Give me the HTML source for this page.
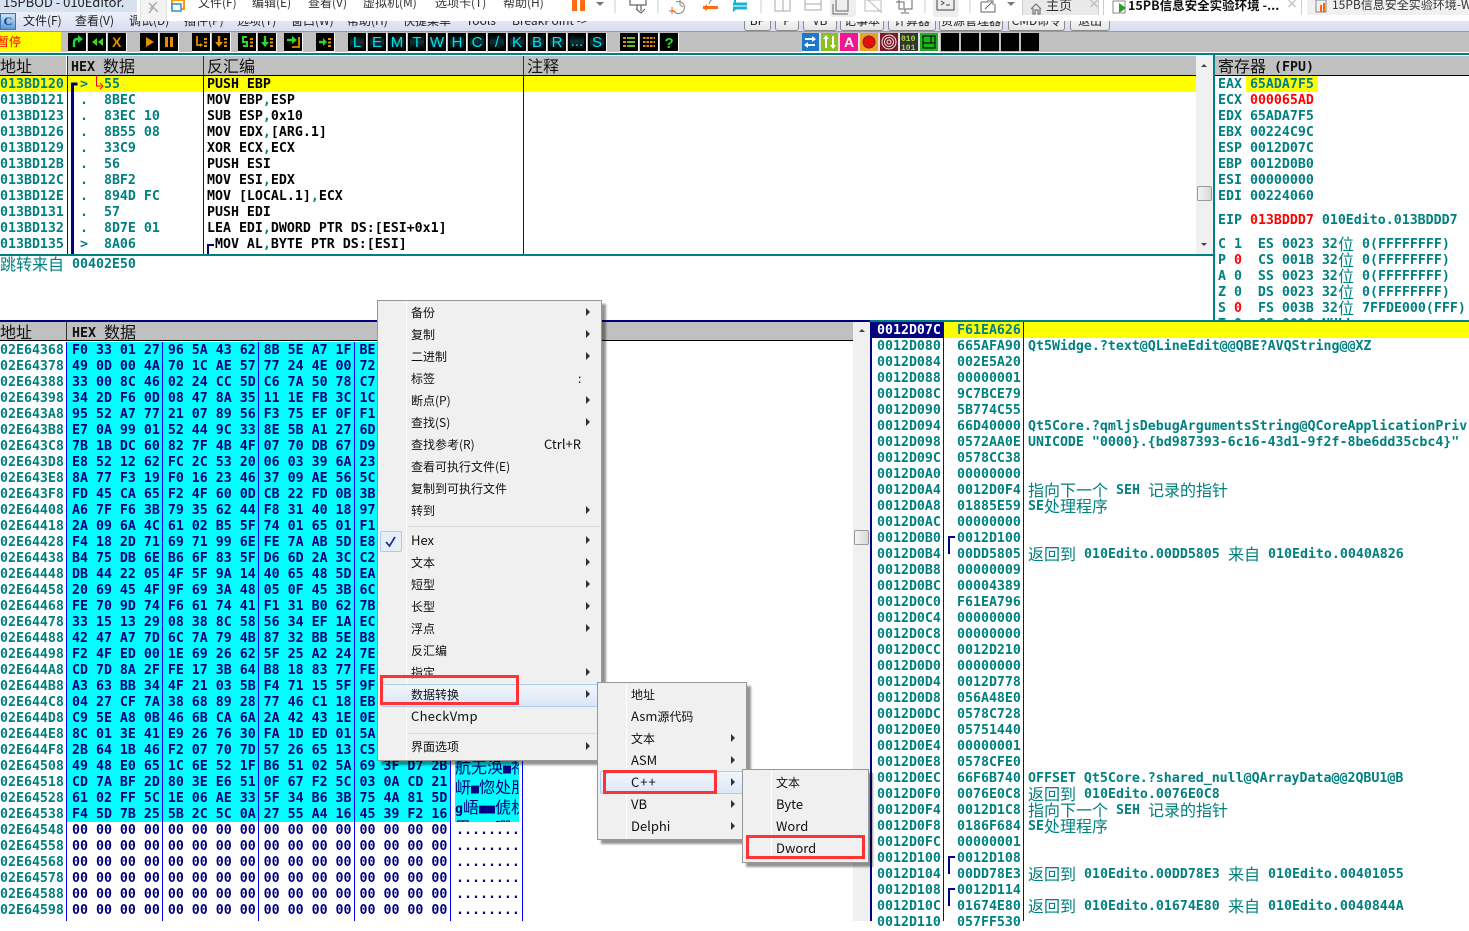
<!DOCTYPE html>
<html><head><meta charset="utf-8"><style>
*{box-sizing:border-box}
html,body{margin:0;padding:0;width:1469px;height:921px;overflow:hidden;background:#fff}
.a{position:absolute;white-space:pre;height:16px;line-height:16px;padding-top:1px}
.m,.a,pre{font:700 13.288px/16px "DejaVu Sans Mono",monospace}
pre{position:absolute;margin:0;white-space:pre;padding-top:1px}
.t{color:#008080}.n{color:#000080}.k{color:#000}.r{color:#f00}
.c{font:400 16px/16px "Noto Sans CJK SC",sans-serif}
.a.c{padding-top:0;margin-top:-1px}
.box{position:absolute}
.hd{position:absolute;height:19px;background:#c0c0c0;color:#111;overflow:hidden;white-space:pre;font:700 13.288px/17px "DejaVu Sans Mono",monospace}
.hd .c{line-height:17px;position:relative;top:1px}
.menu{position:absolute;background:#f0f0f0;border:1px solid #979797;box-shadow:4px 4px 2px rgba(0,0,0,.42);z-index:20}
.gut{position:absolute;top:1px;bottom:1px;width:1px;background:#e2e2e2;border-right:1px solid #fff}
.i{position:absolute;height:22px;font:400 12px/22px "Noto Sans CJK SC","Liberation Sans",sans-serif;color:#111;white-space:pre}
.i.l{font-size:13px;margin-top:-1px}
.ar{position:absolute;width:0;height:0;border-left:4px solid #333;border-top:4px solid transparent;border-bottom:4px solid transparent}
.hl{position:absolute;background:linear-gradient(#f2f6fc,#dbe6f6);border:1px solid #aeccf0;border-radius:2px}
.red{position:absolute;border:3px solid #f33;z-index:40}
.mt{position:absolute;top:13px;font:400 12px/16px "Noto Sans CJK SC","Liberation Sans",sans-serif;color:#222;white-space:pre}
.bt{position:absolute;top:13px;height:18px;border:1px solid #8a8a8a;border-radius:3px;background:linear-gradient(#fff,#e6e6e6);font:400 12px/13px "Noto Sans CJK SC","Liberation Sans",sans-serif;color:#222;text-align:center;white-space:pre;overflow:hidden}
.ot{position:absolute;font:400 12px/16px "Noto Sans CJK SC","Liberation Sans",sans-serif;color:#333;white-space:pre}
.q{font:700 13.288px/16px "DejaVu Sans Mono",monospace}
</style></head><body>

<!-- title + menu bar -->
<div class="box" style="left:0;top:0;width:1469px;height:13px;background:#d6e2f1"></div>
<div class="ot" style="left:3px;top:-6px;font-size:13px;color:#222">15PBOD - 010Editor.</div>
<div class="box" style="left:0;top:12px;width:1469px;height:19px;background:linear-gradient(#eef0fa,#d9ddf0)"></div>
<div class="box" style="left:0;top:13px;width:16px;height:17px;background:linear-gradient(#cfe3f6,#5b9bd5);border:1px solid #3d74b0;color:#123c7c;font:700 12px/15px 'Liberation Serif',serif;text-align:center">C</div>
<div class="mt" style="left:23px">文件(F)</div>
<div class="mt" style="left:75px">查看(V)</div>
<div class="mt" style="left:129px">调试(D)</div>
<div class="mt" style="left:184px">插件(P)</div>
<div class="mt" style="left:237px">选项(T)</div>
<div class="mt" style="left:291px">窗口(W)</div>
<div class="mt" style="left:347px">帮助(H)</div>
<div class="mt" style="left:403px">快捷菜单</div>
<div class="mt" style="left:466px">Tools</div>
<div class="mt" style="left:512px">BreakPoint -&gt;</div>
<div class="bt" style="left:744px;width:27px">BP</div>
<div class="bt" style="left:775px;width:24px">P</div>
<div class="bt" style="left:803px;width:34px">VB</div>
<div class="bt" style="left:840px;width:44px">记事本</div>
<div class="bt" style="left:888px;width:48px">计算器</div>
<div class="bt" style="left:939px;width:64px">资源管理器</div>
<div class="bt" style="left:1008px;width:57px">CMD命令</div>
<div class="bt" style="left:1070px;width:40px">退出</div>

<!-- remote viewer overlay toolbar -->
<div class="box" style="left:137px;top:0;width:1332px;height:21px;background:#fff;z-index:5"></div>
<div style="position:absolute;left:0;top:0;width:1469px;height:21px;overflow:hidden;z-index:6">
<div class="box" style="left:140px;top:-4px;width:27px;height:29px;background:#f3f3f3;border:1px solid #e2e2e2;border-radius:3px"></div>
<div class="ot" style="left:198px;top:-5px">文件(F)</div>
<div class="ot" style="left:252px;top:-5px">编辑(E)</div>
<div class="ot" style="left:308px;top:-5px">查看(V)</div>
<div class="ot" style="left:363px;top:-5px">虚拟机(M)</div>
<div class="ot" style="left:435px;top:-5px">选项卡(T)</div>
<div class="ot" style="left:503px;top:-5px">帮助(H)</div>
<div class="box" style="left:830px;top:-4px;width:26px;height:21px;background:#eee;border-radius:3px"></div>
<div class="box" style="left:933px;top:-4px;width:26px;height:21px;background:#eee;border-radius:3px"></div>
<div class="box" style="left:1022px;top:-2px;width:77px;height:17px;background:#e9e9e9;border-right:1px solid #ccc;border-left:1px solid #ccc"></div>
<div class="ot" style="left:1046px;top:-3px;font-size:13px">主页</div>
<div class="ot" style="left:1088px;top:-4px;color:#bbb;font-weight:700">×</div>
<div class="box" style="left:1103px;top:-2px;width:1px;height:17px;background:#ccc"></div>
<div class="box" style="left:1301px;top:-2px;width:1px;height:17px;background:#ccc"></div>
<div class="box" style="left:1307px;top:-2px;width:162px;height:17px;background:#f0f0f0"></div>
<div class="ot" style="left:1128px;top:-3px;font-size:12.5px;font-weight:700;color:#111">15PB信息安全实验环境 -...</div>
<div class="ot" style="left:1286px;top:-4px;color:#bbb;font-weight:700">×</div>
<div class="ot" style="left:1332px;top:-3px;font-size:12px;color:#333">15PB信息安全实验环境-Wir</div>
<svg width="1469" height="21" style="position:absolute;left:0;top:0" fill="none">
<path d="M150 9l7-7M149 3l9 9M153 8l-4 5" stroke="#aaa" stroke-width="1.4"/>
<rect x="172" y="0" width="12" height="9" stroke="#f90" stroke-width="2"/><rect x="172" y="4" width="9" height="7" fill="#fff" stroke="#2a8fd0" stroke-width="1.5"/>
<rect x="572" y="-2" width="5" height="13" fill="#ff6a13"/><rect x="580" y="-2" width="5" height="13" fill="#ff6a13"/>
<path d="M596 2h8l-4 4z" fill="#777"/>
<path d="M615 0v13M658 0v13M761 0v13M925 0v13M970 0v13" stroke="#ccc"/>
<path d="M630 0v5h16v-5M637 5v5M641 5v6M636 9l5 4 4-4" stroke="#666" stroke-width="1.2"/>
<path d="M673 10a6 6 0 1 0 3-8M680 0v5l3 2" stroke="#888" stroke-width="1"/><path d="M672 7v7M669 11h6" stroke="#f60"/>
<rect x="703" y="6" width="15" height="3" fill="#ff6a13"/><path d="M703 8l4-4v7z" fill="#ff6a13"/><path d="M709 4a6 6 0 0 1 5-5" stroke="#888"/>
<path d="M733 4h14M733 8h14" stroke="#1ab3d4" stroke-width="3"/><path d="M735 0v3M733 11l3-3" stroke="#1ab3d4" stroke-width="2"/>
<path d="M775 0v11h15v-11M783 0v11M805 0v10h16v-10M805 4h16" stroke="#aaa"/>
<path d="M836 0v11h12v-11M833 4v10h15" stroke="#666"/>
<path d="M865 0h16v11h-16zM866 -2l16 15" stroke="#bbb"/>
<path d="M899 0v9h13v-9M896 2h8v6M905 9v3M901 13h8" stroke="#666"/>
<path d="M937 -1v11h17v-11M941 1l3 2-3 2M946 5h4" stroke="#444"/>
<path d="M981 2h7v-2M981 2v10h14v-8M985 9l7-7M989 1h4v4" stroke="#666"/>
<path d="M1007 2h8l-4 4z" fill="#777"/>
<path d="M1031 9l5-5 5 5M1033 8v6h2v-4h3v4h2v-6" stroke="#777" stroke-width="1.2"/>
<rect x="1113" y="1" width="12" height="12" stroke="#888"/><path d="M1119 3l7 5-7 5z" fill="#2a9d2a"/>
<rect x="1316" y="0" width="10" height="12" stroke="#888"/><path d="M1321 12V5M1324 12V3" stroke="#f60" stroke-width="2"/>
</svg>
</div>

<!-- OD toolbar -->
<div class="box" style="left:0;top:31px;width:1469px;height:21px;background:#c0c0c0;border-top:1px solid #9a9a9a"></div>
<div class="box" style="left:0;top:32px;width:61px;height:20px;background:#ff0"></div>
<div class="ot" style="left:-3px;top:34px;color:#f00;font-size:12px">暂停</div>
<svg width="1469" height="52" style="position:absolute;left:0;top:0;z-index:2" fill="none">
<defs>
<g id="b"><rect x="0" y="0" width="18" height="18" fill="#000"/><path d="M0 18.5h18.5V0" stroke="#fff" fill="none"/></g>
<g id="d"><rect x="12" y="5" width="3" height="2" fill="#e69000"/><rect x="12" y="8.5" width="3" height="2" fill="#e69000"/><rect x="12" y="12" width="3" height="2" fill="#e69000"/></g>
<linearGradient id="lg" x1="0" x2="0" y1="0" y2="1"><stop offset="0" stop-color="#000"/><stop offset=".5" stop-color="#0c3436"/><stop offset="1" stop-color="#000"/></linearGradient>
<g id="l"><rect x="0" y="0" width="18" height="18" fill="#000"/><rect x="2" y="2" width="14" height="14" fill="url(#lg)"/><path d="M0 18.5h18.5V0" stroke="#fff" fill="none"/></g>
</defs>
<g transform="translate(68,33)"><use href="#b"/><path d="M6 14V9q0-3 4-3h2" stroke="#18d840" stroke-width="2.4"/><path d="M10 2l5 4-5 4z" fill="#18d840"/></g>
<g transform="translate(88,33)"><use href="#b"/><path d="M9 5v8l-5-4zM15 5v8l-5-4z" fill="#40d820"/></g>
<g transform="translate(108,33)"><use href="#b"/><text x="4" y="14" font-family="Liberation Sans" font-weight="700" font-size="14" fill="#e88c00">X</text></g>
<g transform="translate(140,33)"><use href="#b"/><path d="M6 4l8 5-8 5z" fill="#e88c00"/></g>
<g transform="translate(160,33)"><use href="#b"/><rect x="5" y="4" width="3" height="10" fill="#e88c00"/><rect x="10" y="4" width="3" height="10" fill="#e88c00"/></g>
<g transform="translate(192,33)"><use href="#b"/><path d="M5 3v9h5" stroke="#e88c00" stroke-width="1.8"/><path d="M8 10l3 2-3 2z" fill="#e88c00"/><use href="#d"/></g>
<g transform="translate(212,33)"><use href="#b"/><path d="M7 3v7" stroke="#e88c00" stroke-width="2.4"/><path d="M3 9h8l-4 5z" fill="#e88c00"/><use href="#d"/></g>
<g transform="translate(238,33)"><use href="#b"/><path d="M9 4H5v5h4v4H5" stroke="#28d830" stroke-width="2"/><use href="#d"/></g>
<g transform="translate(258,33)"><use href="#b"/><path d="M7 3v7" stroke="#28d830" stroke-width="2.4"/><path d="M3 9h8l-4 5z" fill="#28d830"/><use href="#d"/></g>
<g transform="translate(284,33)"><use href="#b"/><path d="M3 7h6" stroke="#28d830" stroke-width="2.4"/><path d="M8 3l5 4-5 4z" fill="#28d830"/><path d="M15 4v10h-7" stroke="#e88c00" stroke-width="1.8"/></g>
<g transform="translate(316,33)"><use href="#b"/><path d="M3 9h5" stroke="#28d830" stroke-width="2.4"/><path d="M7 5l4 4-4 4z" fill="#28d830"/><use href="#d"/></g>
<g font-family="Liberation Sans" font-size="15" font-weight="400" fill="#00e0f0" text-anchor="middle">
<g transform="translate(348,33)"><use href="#l"/><text x="9" y="14">L</text></g>
<g transform="translate(368,33)"><use href="#l"/><text x="9" y="14">E</text></g>
<g transform="translate(388,33)"><use href="#l"/><text x="9" y="14">M</text></g>
<g transform="translate(408,33)"><use href="#l"/><text x="9" y="14">T</text></g>
<g transform="translate(428,33)"><use href="#l"/><text x="9" y="14">W</text></g>
<g transform="translate(448,33)"><use href="#l"/><text x="9" y="14">H</text></g>
<g transform="translate(468,33)"><use href="#l"/><text x="9" y="14">C</text></g>
<g transform="translate(488,33)"><use href="#l"/><text x="9" y="14">/</text></g>
<g transform="translate(508,33)"><use href="#l"/><text x="9" y="14">K</text></g>
<g transform="translate(528,33)"><use href="#l"/><text x="9" y="14">B</text></g>
<g transform="translate(548,33)"><use href="#l"/><text x="9" y="14">R</text></g>
<g transform="translate(568,33)"><use href="#l"/><text x="9" y="13">...</text></g>
<g transform="translate(588,33)"><use href="#l"/><text x="9" y="14">S</text></g>
</g>
<g transform="translate(620,33)"><use href="#b"/><path d="M3 5h3M3 9h3M3 13h3" stroke="#e88c00" stroke-width="2"/><path d="M7 5h8M7 9h8M7 13h8" stroke="#60c020" stroke-width="2"/></g>
<g transform="translate(640,33)"><use href="#b"/><path d="M3 5h12M3 9h12M3 13h12" stroke="#e88c00" stroke-width="2"/><path d="M6 3v12M9.500 3v12M13 3v12" stroke="#000"/></g>
<g transform="translate(660,33)"><use href="#b"/><text x="4.500" y="15" font-family="Liberation Sans" font-weight="700" font-size="15" fill="#28e028">?</text></g>
<g>
<rect x="802" y="33" width="17" height="18" fill="#1e78c8"/><path d="M805 39h10M815 45h-10" stroke="#fff" stroke-width="2"/><path d="M812 36l4 3-4 3zM808 42l-4 3 4 3z" fill="#fff"/><path d="M802 51.500h18V33" stroke="#fff"/>
<rect x="821" y="33" width="17" height="18" fill="#8cc020"/><path d="M826 38v10M833 36v10" stroke="#fff" stroke-width="2"/><path d="M823 39l3-4 3 4zM830 45l3 4 3-4z" fill="#fff"/><path d="M821 51.500h18V33" stroke="#fff"/>
<rect x="840" y="33" width="18" height="18" fill="#f01890"/><text x="849" y="47" text-anchor="middle" font-family="Liberation Sans" font-weight="700" font-size="14" fill="#fff">A</text><path d="M840 51.500h19V33" stroke="#fff"/>
<rect x="860" y="33" width="18" height="18" fill="#f0a020"/><circle cx="869" cy="42" r="6" fill="#e01010" stroke="#802020"/><path d="M860 51.500h19V33" stroke="#fff"/>
<rect x="880" y="33" width="18" height="18" fill="#801828"/><circle cx="889" cy="42" r="7" stroke="#eee"/><circle cx="889" cy="42" r="4.500" stroke="#eee"/><circle cx="889" cy="42" r="2" stroke="#eee"/><path d="M880 51.500h19V33" stroke="#fff"/>
<rect x="900" y="33" width="18" height="18" fill="#333"/><text x="901" y="41" font-family="Liberation Mono" font-size="8" font-weight="700" fill="#a8d840">010</text><text x="901" y="50" font-family="Liberation Mono" font-size="8" font-weight="700" fill="#a8d840">101</text><path d="M900 51.500h19V33" stroke="#fff"/>
<rect x="920" y="33" width="18" height="18" fill="#20b020"/><rect x="923" y="36" width="12" height="12" stroke="#000"/><path d="M931 36v7M923 43h12" stroke="#000"/><path d="M920 51.500h19V33" stroke="#fff"/>
<rect x="941" y="33" width="18" height="18" fill="#000"/><rect x="961" y="33" width="18" height="18" fill="#000"/><rect x="981" y="33" width="18" height="18" fill="#000"/><rect x="1001" y="33" width="18" height="18" fill="#000"/><rect x="1021" y="33" width="18" height="18" fill="#000"/>
</g>
</svg>
<div class="box" style="left:0;top:53px;width:1469px;height:2px;background:#008080"></div>

<!-- disasm pane headers -->
<div class="hd" style="left:0;top:56px;width:66px"><span class="c">地址</span></div>
<div class="hd" style="left:68px;top:56px;width:135px;padding-left:3px">HEX <span class="c">数据</span></div>
<div class="hd" style="left:204px;top:56px;width:319px;padding-left:3px"><span class="c">反汇编</span></div>
<div class="hd" style="left:524px;top:56px;width:672px;padding-left:3px"><span class="c">注释</span></div>
<div class="box" style="left:0;top:75px;width:1196px;height:1px;background:#000"></div>
<div class="box" style="left:67px;top:56px;width:1px;height:19px;background:#333"></div>
<div class="box" style="left:203px;top:56px;width:1px;height:19px;background:#333"></div>
<div class="box" style="left:523px;top:56px;width:1px;height:19px;background:#333"></div>
<div class="box" style="left:0;top:76px;width:1196px;height:16px;background:#ff0"></div>
<div class="box" style="left:67px;top:76px;width:1px;height:178px;background:#00f"></div>
<div class="box" style="left:203px;top:76px;width:1px;height:178px;background:#00f"></div>
<div class="box" style="left:523px;top:76px;width:1px;height:178px;background:#00f"></div>
<pre class="t" style="left:0;top:76px">013BD120
013BD121
013BD123
013BD126
013BD129
013BD12B
013BD12C
013BD12E
013BD131
013BD132
013BD135</pre>
<pre class="t" style="left:80px;top:76px">&gt;  55
.  8BEC
.  83EC 10
.  8B55 08
.  33C9
.  56
.  8BF2
.  894D FC
.  57
.  8D7E 01
&gt;  8A06</pre>
<pre class="k" style="left:207px;top:76px">PUSH EBP
MOV EBP<span class="t">,</span>ESP
SUB ESP<span class="t">,</span>0x10
MOV EDX<span class="t">,</span>[ARG.1]
XOR ECX<span class="t">,</span>ECX
PUSH ESI
MOV ESI<span class="t">,</span>EDX
MOV [LOCAL.1]<span class="t">,</span>ECX
PUSH EDI
LEA EDI<span class="t">,</span>DWORD PTR DS:[ESI+0x1]
 MOV AL<span class="t">,</span>BYTE PTR DS:[ESI]</pre>
<svg width="240" height="260" style="position:absolute;left:0;top:0;z-index:3" fill="none">
<path d="M72.500 254V84h5" stroke="#000080" stroke-width="3"/>
<path d="M96.500 76v10h5" stroke="#f00"/><path d="M100 83l3 3-3 3" stroke="#f00"/>
<path d="M208 254v-9h6" stroke="#000080" stroke-width="2"/>
</svg>
<!-- disasm scrollbar -->
<div class="box" style="left:1196px;top:56px;width:17px;height:198px;background:#f0f0f0"></div>
<div class="box" style="left:1197px;top:186px;width:15px;height:15px;background:linear-gradient(90deg,#f4f4f4,#d8d8d8);border:1px solid #999;border-radius:2px"></div>
<svg width="1469" height="260" style="position:absolute;left:0;top:0;z-index:3"><path d="M1201 67h6l-3-3zM1201 243h6l-3 3z" fill="#444"/></svg>
<div class="box" style="left:0;top:254px;width:1213px;height:2px;background:#008080"></div>
<div class="a t c" style="left:0;top:256px">跳转来自</div>
<div class="a t" style="left:72px;top:256px">00402E50</div>

<!-- registers -->
<div class="box" style="left:1213px;top:55px;width:2px;height:265px;background:#008080"></div>
<div class="hd" style="left:1215px;top:56px;width:254px;padding-left:3px"><span class="c">寄存器</span> (FPU)</div>
<div class="box" style="left:1215px;top:75px;width:254px;height:1px;background:#000"></div>
<div class="box" style="left:1246px;top:76px;width:72px;height:16px;background:#ff0"></div>
<div style="position:absolute;left:1218px;top:76px;width:251px;height:244px;overflow:hidden">
<pre class="t" style="left:0;top:0">EAX 65ADA7F5
ECX <span class="r">000065AD</span>
EDX 65ADA7F5
EBX 00224C9C
ESP 0012D07C
EBP 0012D0B0
ESI 00000000
EDI 00224060</pre>
<div class="a t" style="left:0;top:136px">EIP <span class="r">013BDDD7</span> 010Edito.013BDDD7</div>
<div class="a t" style="left:0;top:160px">C 1  ES 0023 32</div><div class="a t c" style="left:120px;top:160px">位</div><div class="a t" style="left:144px;top:160px">0(FFFFFFFF)</div>
<div class="a t" style="left:0;top:176px">P <span class="r">0</span>  CS 001B 32</div><div class="a t c" style="left:120px;top:176px">位</div><div class="a t" style="left:144px;top:176px">0(FFFFFFFF)</div>
<div class="a t" style="left:0;top:192px">A 0  SS 0023 32</div><div class="a t c" style="left:120px;top:192px">位</div><div class="a t" style="left:144px;top:192px">0(FFFFFFFF)</div>
<div class="a t" style="left:0;top:208px">Z 0  DS 0023 32</div><div class="a t c" style="left:120px;top:208px">位</div><div class="a t" style="left:144px;top:208px">0(FFFFFFFF)</div>
<div class="a t" style="left:0;top:224px">S <span class="r">0</span>  FS 003B 32</div><div class="a t c" style="left:120px;top:224px">位</div><div class="a t" style="left:144px;top:224px">7FFDE000(FFF)</div>
<div class="a t" style="left:0;top:240px">T 0  GS 0000 NULL</div>
</div>

<!-- hex dump -->
<div class="box" style="left:0;top:320px;width:870px;height:2px;background:#000080"></div>
<div class="hd" style="left:0;top:322px;width:66px;height:18px"><span class="c">地址</span></div>
<div class="hd" style="left:67px;top:322px;width:786px;height:18px;padding-left:5px">HEX <span class="c">数据</span></div>
<div class="box" style="left:66px;top:322px;width:1px;height:18px;background:#333"></div>
<div class="box" style="left:0;top:340px;width:853px;height:1px;background:#000"></div>
<div class="box" style="left:66px;top:342px;width:384px;height:480px;background:#0ff"></div>
<div class="box" style="left:455px;top:342px;width:64px;height:480px;background:#0ff"></div>
<div class="box" style="left:66px;top:342px;width:1px;height:579px;background:#00f"></div>
<div class="box" style="left:162px;top:342px;width:1px;height:579px;background:#00f"></div>
<div class="box" style="left:258px;top:342px;width:1px;height:579px;background:#00f"></div>
<div class="box" style="left:354px;top:342px;width:1px;height:579px;background:#00f"></div>
<div class="box" style="left:450px;top:342px;width:1px;height:579px;background:#00f"></div>
<div class="box" style="left:522px;top:342px;width:1px;height:579px;background:#00f"></div>
<pre class="t" style="left:0;top:342px">02E64368
02E64378
02E64388
02E64398
02E643A8
02E643B8
02E643C8
02E643D8
02E643E8
02E643F8
02E64408
02E64418
02E64428
02E64438
02E64448
02E64458
02E64468
02E64478
02E64488
02E64498
02E644A8
02E644B8
02E644C8
02E644D8
02E644E8
02E644F8
02E64508
02E64518
02E64528
02E64538
02E64548
02E64558
02E64568
02E64578
02E64588
02E64598</pre>
<pre class="n" style="left:72px;top:342px">F0 33 01 27 96 5A 43 62 8B 5E A7 1F BE
49 0D 00 4A 70 1C AE 57 77 24 4E 00 72
33 00 8C 46 02 24 CC 5D C6 7A 50 78 C7
34 2D F6 0D 08 47 8A 35 11 1E FB 3C 1C
95 52 A7 77 21 07 89 56 F3 75 EF 0F F1
E7 0A 99 01 52 44 9C 33 8E 5B A1 27 6D
7B 1B DC 60 82 7F 4B 4F 07 70 DB 67 D9
E8 52 12 62 FC 2C 53 20 06 03 39 6A 23
8A 77 F3 19 F0 16 23 46 37 09 AE 56 5C
FD 45 CA 65 F2 4F 60 0D CB 22 FD 0B 3B
A6 7F F6 3B 79 35 62 44 F8 31 40 18 97
2A 09 6A 4C 61 02 B5 5F 74 01 65 01 F1
F4 18 2D 71 69 71 99 6E FE 7A AB 5D E8
B4 75 DB 6E B6 6F 83 5F D6 6D 2A 3C C2
DB 44 22 05 4F 5F 9A 14 40 65 48 5D EA
20 69 45 4F 9F 69 3A 48 05 0F 45 3B 6C
FE 70 9D 74 F6 61 74 41 F1 31 B0 62 7B
33 15 13 29 08 38 8C 58 56 34 EF 1A EC
42 47 A7 7D 6C 7A 79 4B 87 32 BB 5E B8
F2 4F ED 00 1E 69 26 62 5F 25 A2 24 7E
CD 7D 8A 2F FE 17 3B 64 B8 18 83 77 FE
A3 63 BB 34 4F 21 03 5B F4 71 15 5F 9F
04 27 CF 7A 38 68 89 28 77 46 C1 18 EB
C9 5E A8 0B 46 6B CA 6A 2A 42 43 1E 0E
8C 01 3E 41 E9 26 76 30 FA 1D ED 01 5A
2B 64 1B 46 F2 07 70 7D 57 26 65 13 C5
49 48 E0 65 1C 6E 52 1F B6 51 02 5A 69 3F D7 2B
CD 7A BF 2D 80 3E E6 51 0F 67 F2 5C 03 0A CD 21
61 02 FF 5C 1E 06 AE 33 5F 34 B6 3B 75 4A 81 5D
F4 5D 7B 25 5B 2C 5C 0A 27 55 A4 16 45 39 F2 16
00 00 00 00 00 00 00 00 00 00 00 00 00 00 00 00
00 00 00 00 00 00 00 00 00 00 00 00 00 00 00 00
00 00 00 00 00 00 00 00 00 00 00 00 00 00 00 00
00 00 00 00 00 00 00 00 00 00 00 00 00 00 00 00
00 00 00 00 00 00 00 00 00 00 00 00 00 00 00 00
00 00 00 00 00 00 00 00 00 00 00 00 00 00 00 00</pre>
<div style="position:absolute;left:455px;top:758px;width:64px;height:64px;overflow:hidden;color:#000080;font:400 16px/16px 'Noto Sans CJK SC',sans-serif;white-space:pre">航无涣<span class="q">■</span>祫
岍<span class="q">■</span>惚处朋
<span class="q">g</span>峿<span class="q">■■</span>俿枤
巴<span class="q">■■■</span>唧<span class="q">■</span></div>
<pre class="n" style="left:456px;top:822px">........
........
........
........
........
........</pre>

<!-- hex scrollbar -->
<div class="box" style="left:853px;top:322px;width:17px;height:599px;background:#f0f0f0"></div>
<div class="box" style="left:854px;top:530px;width:15px;height:15px;background:linear-gradient(90deg,#f4f4f4,#d8d8d8);border:1px solid #999;border-radius:2px"></div>
<svg width="1469" height="340" style="position:absolute;left:0;top:0;z-index:3"><path d="M859 332h6l-3-3z" fill="#444"/></svg>

<!-- stack -->
<div class="box" style="left:870px;top:320px;width:599px;height:2px;background:#008080"></div>
<div class="box" style="left:870px;top:322px;width:2px;height:599px;background:#000080"></div>
<div class="box" style="left:872px;top:322px;width:71px;height:16px;background:#000080"></div>
<div class="box" style="left:943px;top:322px;width:526px;height:16px;background:#ff0"></div>
<div class="box" style="left:943px;top:322px;width:1px;height:599px;background:#00f"></div>
<div class="box" style="left:1023px;top:322px;width:1px;height:599px;background:#00f"></div>
<pre class="t" style="left:877px;top:322px"><span style="color:#fff">0012D07C</span>
0012D080
0012D084
0012D088
0012D08C
0012D090
0012D094
0012D098
0012D09C
0012D0A0
0012D0A4
0012D0A8
0012D0AC
0012D0B0
0012D0B4
0012D0B8
0012D0BC
0012D0C0
0012D0C4
0012D0C8
0012D0CC
0012D0D0
0012D0D4
0012D0D8
0012D0DC
0012D0E0
0012D0E4
0012D0E8
0012D0EC
0012D0F0
0012D0F4
0012D0F8
0012D0FC
0012D100
0012D104
0012D108
0012D10C
0012D110</pre>
<pre class="t" style="left:957px;top:322px">F61EA626
665AFA90
002E5A20
00000001
9C7BCE79
5B774C55
66D40000
0572AA0E
0578CC38
00000000
0012D0F4
01885E59
00000000
0012D100
00DD5805
00000009
00004389
F61EA796
00000000
00000000
0012D210
00000000
0012D778
056A48E0
0578C728
05751440
00000001
0578CFE0
66F6B740
0076E0C8
0012D1C8
0186F684
00000001
0012D108
00DD78E3
0012D114
01674E80
057FF530</pre>
<svg width="960" height="921" style="position:absolute;left:0;top:0;z-index:3" fill="none">
<path d="M949 554V537h6M949 874V857h6M949 906V889h6" stroke="#000080" stroke-width="2"/>
</svg>
<div class="a t" style="left:1028px;top:338px">Qt5Widge.?text@QLineEdit@@QBE?AVQString@@XZ</div>
<div class="a t" style="left:1028px;top:418px">Qt5Core.?qmljsDebugArgumentsString@QCoreApplicationPriv</div>
<div class="a t" style="left:1028px;top:434px">UNICODE "0000}.{bd987393-6c16-43d1-9f2f-8be6dd35cbc4}"</div>
<div class="a t c" style="left:1028px;top:482px">指向下一个</div><div class="a t" style="left:1116px;top:482px">SEH</div><div class="a t c" style="left:1148px;top:482px">记录的指针</div>
<div class="a t" style="left:1028px;top:498px">SE</div><div class="a t c" style="left:1044px;top:498px">处理程序</div>
<div class="a t c" style="left:1028px;top:546px">返回到</div><div class="a t" style="left:1084px;top:546px">010Edito.00DD5805</div><div class="a t c" style="left:1228px;top:546px">来自</div><div class="a t" style="left:1268px;top:546px">010Edito.0040A826</div>
<div class="a t" style="left:1028px;top:770px">OFFSET Qt5Core.?shared_null@QArrayData@@2QBU1@B</div>
<div class="a t c" style="left:1028px;top:786px">返回到</div><div class="a t" style="left:1084px;top:786px">010Edito.0076E0C8</div>
<div class="a t c" style="left:1028px;top:802px">指向下一个</div><div class="a t" style="left:1116px;top:802px">SEH</div><div class="a t c" style="left:1148px;top:802px">记录的指针</div>
<div class="a t" style="left:1028px;top:818px">SE</div><div class="a t c" style="left:1044px;top:818px">处理程序</div>
<div class="a t c" style="left:1028px;top:866px">返回到</div><div class="a t" style="left:1084px;top:866px">010Edito.00DD78E3</div><div class="a t c" style="left:1228px;top:866px">来自</div><div class="a t" style="left:1268px;top:866px">010Edito.00401055</div>
<div class="a t c" style="left:1028px;top:898px">返回到</div><div class="a t" style="left:1084px;top:898px">010Edito.01674E80</div><div class="a t c" style="left:1228px;top:898px">来自</div><div class="a t" style="left:1268px;top:898px">010Edito.0040844A</div>

<!-- context menu -->
<div class="menu" style="left:377px;top:300px;width:225px;height:461px">
<div class="gut" style="left:28px"></div>
<div class="i" style="left:33px;top:1px">备份</div><div class="ar" style="left:208px;top:7px"></div>
<div class="i" style="left:33px;top:23px">复制</div><div class="ar" style="left:208px;top:29px"></div>
<div class="i" style="left:33px;top:45px">二进制</div><div class="ar" style="left:208px;top:51px"></div>
<div class="i" style="left:33px;top:67px">标签</div><div class="i" style="left:200px;top:67px">:</div>
<div class="i" style="left:33px;top:89px">断点(P)</div><div class="ar" style="left:208px;top:95px"></div>
<div class="i" style="left:33px;top:111px">查找(S)</div><div class="ar" style="left:208px;top:117px"></div>
<div class="i" style="left:33px;top:133px">查找参考(R)</div><div class="i l" style="left:166px;top:133px">Ctrl+R</div>
<div class="i" style="left:33px;top:155px">查看可执行文件(E)</div>
<div class="i" style="left:33px;top:177px">复制到可执行文件</div>
<div class="i" style="left:33px;top:199px">转到</div><div class="ar" style="left:208px;top:205px"></div>
<div class="box" style="left:30px;top:225px;width:192px;height:1px;background:#dcdcdc"></div>
<div class="box" style="left:2px;top:230px;width:22px;height:21px;background:#e6eefa;border:1px solid #aeccee;border-radius:2px"></div>
<svg width="22" height="21" style="position:absolute;left:2px;top:230px" fill="none"><path d="M6 11l3.500 4L15 6" stroke="#1a2a90" stroke-width="1.700"/></svg>
<div class="i l" style="left:33px;top:229px">Hex</div><div class="ar" style="left:208px;top:235px"></div>
<div class="i" style="left:33px;top:251px">文本</div><div class="ar" style="left:208px;top:257px"></div>
<div class="i" style="left:33px;top:273px">短型</div><div class="ar" style="left:208px;top:279px"></div>
<div class="i" style="left:33px;top:295px">长型</div><div class="ar" style="left:208px;top:301px"></div>
<div class="i" style="left:33px;top:317px">浮点</div><div class="ar" style="left:208px;top:323px"></div>
<div class="i" style="left:33px;top:339px">反汇编</div>
<div class="i" style="left:33px;top:361px">指定</div><div class="ar" style="left:208px;top:367px"></div>
<div class="hl" style="left:3px;top:383px;width:220px;height:23px"></div>
<div class="i" style="left:33px;top:383px">数据转换</div><div class="ar" style="left:208px;top:389px"></div>
<div class="i l" style="left:33px;top:405px;letter-spacing:.3px">CheckVmp</div>
<div class="box" style="left:30px;top:432px;width:192px;height:1px;background:#dcdcdc"></div>
<div class="i" style="left:33px;top:435px">界面选项</div><div class="ar" style="left:208px;top:441px"></div>
</div>
<div class="menu" style="left:597px;top:682px;width:150px;height:158px;z-index:21">
<div class="gut" style="left:28px"></div>
<div class="i" style="left:33px;top:1px">地址</div>
<div class="i l" style="left:33px;top:23px">Asm<span style="font-size:12px">源代码</span></div>
<div class="i" style="left:33px;top:45px">文本</div><div class="ar" style="left:133px;top:51px"></div>
<div class="i l" style="left:33px;top:67px">ASM</div><div class="ar" style="left:133px;top:73px"></div>
<div class="hl" style="left:2px;top:88px;width:147px;height:23px"></div>
<div class="i l" style="left:33px;top:89px;letter-spacing:1px">C++</div><div class="ar" style="left:133px;top:95px"></div>
<div class="i l" style="left:33px;top:111px">VB</div><div class="ar" style="left:133px;top:117px"></div>
<div class="i l" style="left:33px;top:133px">Delphi</div><div class="ar" style="left:133px;top:139px"></div>
</div>
<div class="menu" style="left:742px;top:769px;width:127px;height:94px;z-index:22">
<div class="gut" style="left:28px"></div>
<div class="i" style="left:33px;top:2px">文本</div>
<div class="i l" style="left:33px;top:24px">Byte</div>
<div class="i l" style="left:33px;top:46px">Word</div>
<div class="i l" style="left:33px;top:68px">Dword</div>
</div>
<div class="red" style="left:380px;top:675px;width:139px;height:30px"></div>
<div class="red" style="left:603px;top:770px;width:114px;height:24px"></div>
<div class="red" style="left:746px;top:835px;width:119px;height:24px"></div>
</body></html>
